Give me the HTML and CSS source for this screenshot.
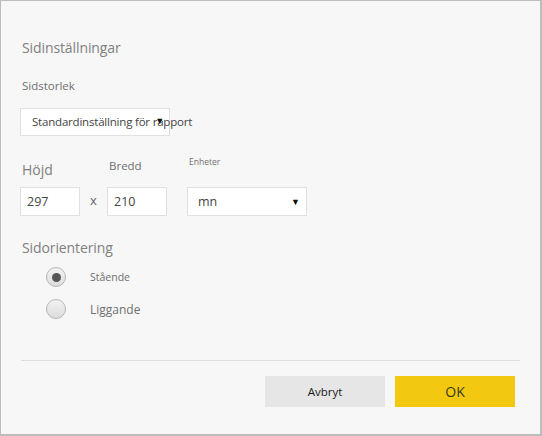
FILE: index.html
```html
<!DOCTYPE html>
<html>
<head>
<meta charset="utf-8">
<link rel="stylesheet" href="styles.css">
</head>
<body>
<div class="dialog">
  <div class="title">Sidinställningar</div>
  <div class="label">Sidstorlek</div>
  <div class="select wide"><span>Standardinställning för rapport</span><span class="arrow arrow-wide">▼</span></div>
  <div class="dims">
    <div class="col c60">
      <div class="big-label hojd">Höjd</div>
      <div class="box">297</div>
    </div>
    <div class="times">x</div>
    <div class="col c60">
      <div class="label bredd">Bredd</div>
      <div class="box">210</div>
    </div>
    <div class="col c120">
      <div class="tiny-label">Enheter</div>
      <div class="box units"><span>mn</span><span class="arrow">▼</span></div>
    </div>
  </div>
  <div class="title orient">Sidorientering</div>
  <div class="radios">
    <div class="radio-row"><span class="radio checked"></span><span class="rlabel small">Stående</span></div>
    <div class="radio-row"><span class="radio"></span><span class="rlabel">Liggande</span></div>
  </div>
  <div class="divider"></div>
  <div class="buttons">
    <button class="btn cancel">Avbryt</button>
    <button class="btn ok">OK</button>
  </div>
</div>
</body>
</html>
```
FILE: styles.css
```css
html, body { margin: 0; padding: 0; }
body { width: 542px; height: 436px; font-family: "Open Sans", "Liberation Sans", sans-serif; }
.dialog {
  box-sizing: border-box;
  width: 542px; height: 436px;
  background: #f7f7f7;
  border: 1px solid #bdbdbd;
  border-right-width: 2px;
  border-bottom-width: 2px;
  padding: 37px 20px 0 19px;
}
.title { font-size: 14px; line-height: 20px; height: 20px; color: #808080; padding-left: 2px; letter-spacing: -0.1px; }
.label { font-size: 11.5px; line-height: 16px; color: #707070; padding-left: 2px; }
.dialog > .label { margin-top: 20px; }
.select {
  box-sizing: border-box;
  position: relative;
  margin-top: 14px;
  width: 150px; height: 28px;
  background: #fff;
  border: 1px solid #e0e0e0;
  font-size: 11.5px; line-height: 26px; color: #444;
  padding-left: 11px;
  white-space: nowrap;
  overflow: visible;
  letter-spacing: -0.2px;
}
.arrow { position: absolute; right: 7px; top: 0; font-size: 9px; color: #111; }
.arrow-wide { right: 5px; top: -1px; }
.dims { display: flex; align-items: flex-end; margin-top: 20px; }
.col { display: flex; flex-direction: column; }
.c60 { width: 60px; }
.c120 { width: 120px; margin-left: 20px; }
.big-label { font-size: 14px; line-height: 18px; color: #808080; padding-left: 2px; margin-bottom: 8px; }
.bredd { margin-bottom: 13px; padding-left: 2px; }
.tiny-label { font-size: 8.5px; line-height: 12px; color: #707070; padding-left: 2px; margin-bottom: 19px; }
.box {
  box-sizing: border-box;
  position: relative;
  height: 29px;
  background: #fff;
  border: 1px solid #e0e0e0;
  font-size: 12.5px; line-height: 27px; color: #444;
  padding-left: 6px;
}
.units { padding-left: 10px; }
.units .arrow { right: 6px; font-size: 9px; top: 0; }
.times { width: 27px; height: 29px; line-height: 27px; font-size: 13px; color: #666; text-align: center; }
.orient { margin-top: 22px; }
.radios { margin-top: 3px; padding-left: 26px; }
.radio-row { display: flex; align-items: center; height: 32px; }
.radio {
  box-sizing: border-box;
  width: 20px; height: 20px;
  border-radius: 50%;
  border: 1px solid #b5b5b5;
  background: linear-gradient(#f3f3f3, #dcdcdc);
  display: flex; align-items: center; justify-content: center;
}
.radio.checked::after {
  content: ""; width: 9px; height: 9px; border-radius: 50%; background: #555;
}
.rlabel { margin-left: 24px; font-size: 12px; color: #707070; }
.rlabel.small { font-size: 10.5px; }
.divider { height: 1px; background: #dedede; margin-top: 35px; margin-left: 1px; }
.buttons { display: flex; justify-content: flex-end; gap: 10px; margin-top: 15px; padding-right: 5px; }
.btn {
  width: 120px; height: 31px; border: none; font-family: inherit; padding: 0; cursor: default;
}
.cancel { background: #e6e6e6; color: #1a1a1a; font-size: 11.5px; }
.ok { background: #f2c811; color: #3a3a1a; font-size: 14px; }
```
